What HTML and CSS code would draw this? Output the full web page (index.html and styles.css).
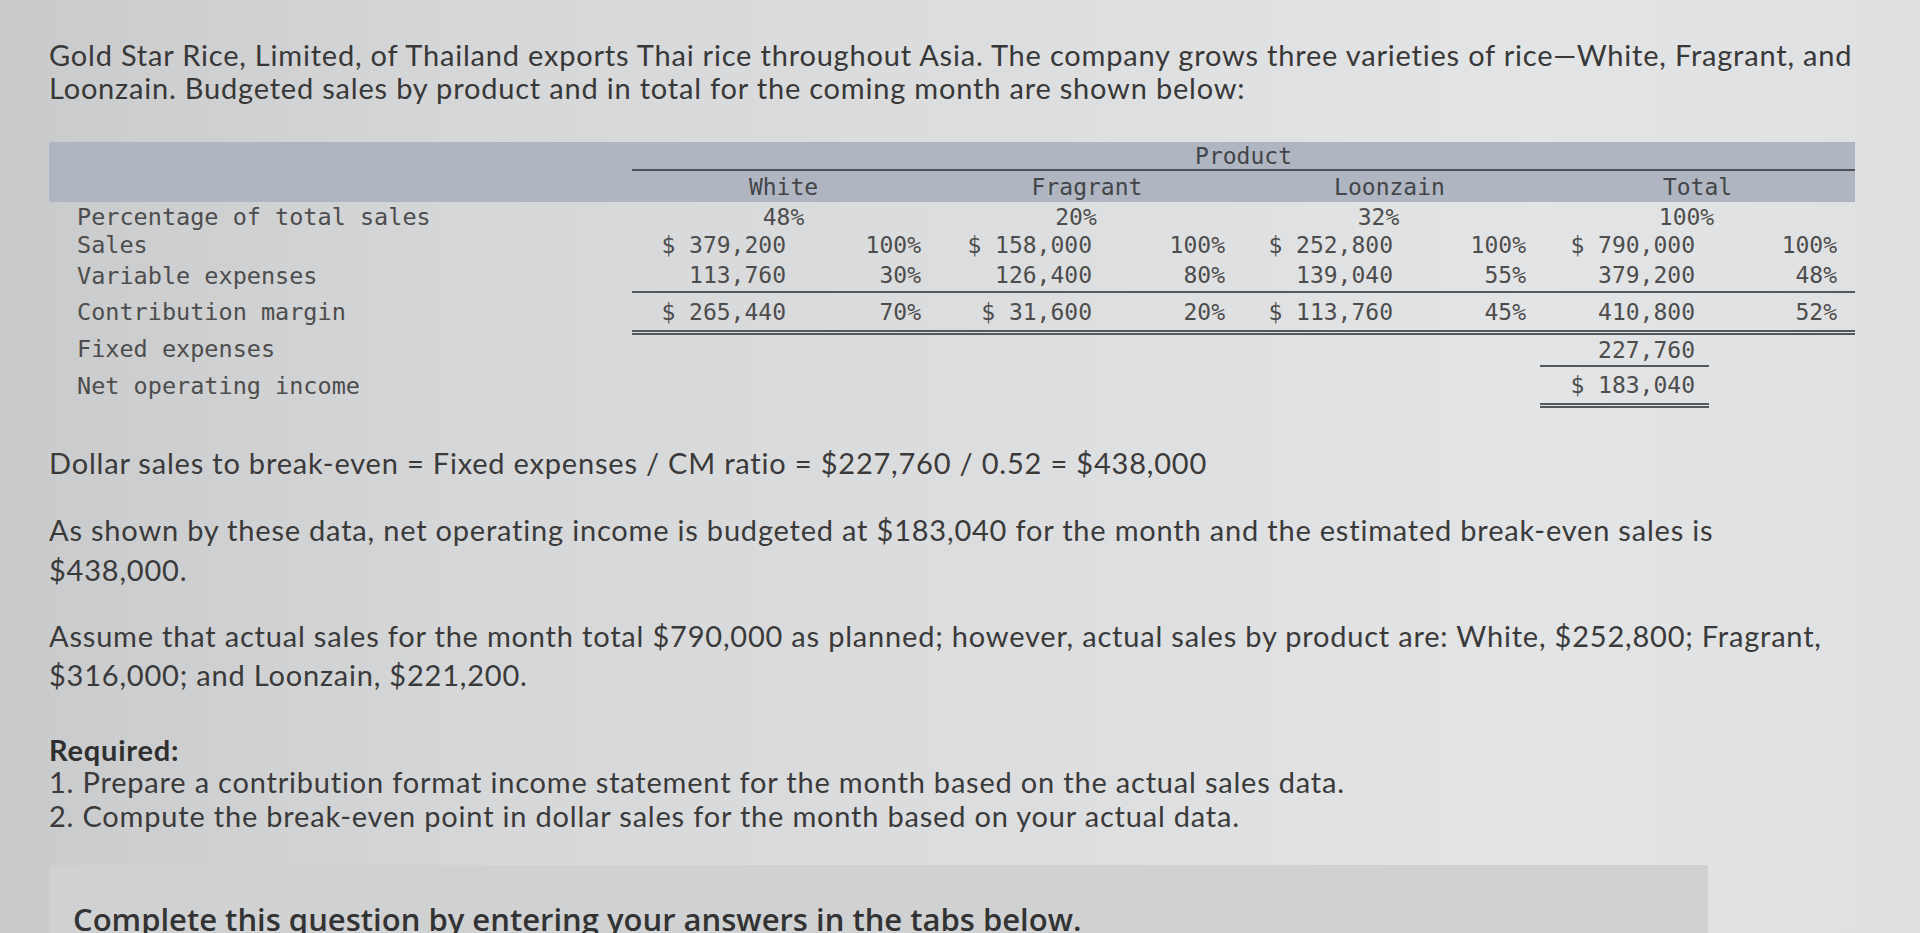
FILE: index.html
```html
<!DOCTYPE html>
<html lang="en">
<head>
<meta charset="utf-8">
<title>Gold Star Rice</title>
<link rel="stylesheet" href="styles.css">
</head>
<body>
<div class="page">
  <p class="intro">Gold Star Rice, Limited, of Thailand exports Thai rice throughout Asia. The company grows three varieties of rice—White, Fragrant, and<br>Loonzain. Budgeted sales by product and in total for the coming month are shown below:</p>

  <table class="stmt">
    <colgroup>
      <col class="c-lbl">
      <col class="c-a1"><col class="c-p1">
      <col class="c-a2"><col class="c-p2">
      <col class="c-a3"><col class="c-p3">
      <col class="c-a4"><col class="c-p4">
    </colgroup>
    <thead>
      <tr class="h1">
        <th class="lbl"></th>
        <th colspan="8" class="prod">Product</th>
      </tr>
      <tr class="h2">
        <th class="lbl"></th>
        <th colspan="2">White</th>
        <th colspan="2">Fragrant</th>
        <th colspan="2">Loonzain</th>
        <th colspan="2">Total</th>
      </tr>
    </thead>
    <tbody>
      <tr class="r-pct">
        <td class="lbl">Percentage of total sales</td>
        <td colspan="2" class="share first">48%</td>
        <td colspan="2" class="share">20%</td>
        <td colspan="2" class="share">32%</td>
        <td colspan="2" class="share">100%</td>
      </tr>
      <tr class="r-sales">
        <td class="lbl">Sales</td>
        <td class="amt">$ 379,200</td><td class="pct">100%</td>
        <td class="amt">$ 158,000</td><td class="pct">100%</td>
        <td class="amt">$ 252,800</td><td class="pct">100%</td>
        <td class="amt">$ 790,000</td><td class="pct last">100%</td>
      </tr>
      <tr class="r-var">
        <td class="lbl">Variable expenses</td>
        <td class="amt">113,760</td><td class="pct">30%</td>
        <td class="amt">126,400</td><td class="pct">80%</td>
        <td class="amt">139,040</td><td class="pct">55%</td>
        <td class="amt">379,200</td><td class="pct last">48%</td>
      </tr>
      <tr class="r-cm">
        <td class="lbl">Contribution margin</td>
        <td class="amt">$ 265,440</td><td class="pct">70%</td>
        <td class="amt">$ 31,600</td><td class="pct">20%</td>
        <td class="amt">$ 113,760</td><td class="pct">45%</td>
        <td class="amt tot">410,800</td><td class="pct last">52%</td>
      </tr>
      <tr class="r-fixed">
        <td class="lbl">Fixed expenses</td>
        <td></td><td></td><td></td><td></td><td></td><td></td>
        <td class="amt tot single">227,760</td><td></td>
      </tr>
      <tr class="r-net">
        <td class="lbl">Net operating income</td>
        <td></td><td></td><td></td><td></td><td></td><td></td>
        <td class="amt tot dbl">$ 183,040</td><td></td>
      </tr>
    </tbody>
  </table>

  <p class="formula">Dollar sales to break-even = Fixed expenses / CM ratio = $227,760 / 0.52 = $438,000</p>

  <p class="shown">As shown by these data, net operating income is budgeted at $183,040 for the month and the estimated break-even sales is<br>$438,000.</p>

  <p class="assume">Assume that actual sales for the month total $790,000 as planned; however, actual sales by product are: White, $252,800; Fragrant,<br>$316,000; and Loonzain, $221,200.</p>

  <div class="required">
    <p class="req-title">Required:</p>
    <p class="req-item">1. Prepare a contribution format income statement for the month based on the actual sales data.</p>
    <p class="req-item">2. Compute the break-even point in dollar sales for the month based on your actual data.</p>
  </div>

  <div class="answer-box">
    <p class="answer-text">Complete this question by entering your answers in the tabs below.</p>
  </div>
</div>
</body>
</html>
```

FILE: styles.css
```css
html, body {
  margin: 0;
  padding: 0;
  height: 933px;
  overflow: hidden;
}

body {
  background: linear-gradient(90deg, #c9cacc 0%, #d6d7d9 25%, #dddedf 55%, #e3e4e5 80%, #dfe0e1 100%);
  font-family: Lato, "Open Sans", "Liberation Sans", sans-serif;
  color: #3a3a3a;
}

.page {
  padding: 38px 0 0 49px;
}

p {
  margin: 0;
}

.intro,
.formula,
.shown,
.assume,
.required {
  font-size: 29px;
  letter-spacing: 0.8px;
  white-space: nowrap;
}

.intro {
  line-height: 33px;
  color: #383838;
}

/* ---------- Table ---------- */
.stmt {
  margin-top: 38px;
  width: 1806px;
  table-layout: fixed;
  border-collapse: collapse;
  border-spacing: 0;
  font-family: "DejaVu Sans Mono", "Liberation Mono", monospace;
  font-size: 23px;
  color: #4d4d4d;
}

.c-lbl { width: 583px; }
.c-a1 { width: 168px; }
.c-p1 { width: 135px; }
.c-a2 { width: 171px; }
.c-p2 { width: 133px; }
.c-a3 { width: 168px; }
.c-p3 { width: 133px; }
.c-a4 { width: 169px; }
.c-p4 { width: 146px; }

.stmt th,
.stmt td {
  padding: 0;
  white-space: nowrap;
}

.stmt thead th {
  background: #afb6c1;
  font-weight: normal;
  color: #434548;
  text-align: center;
}

.stmt .h1 th {
  height: 27px;
}

.stmt .h1 .prod {
  border-bottom: 2px solid #4f5358;
  vertical-align: middle;
}

.stmt .h2 th {
  height: 31px;
}

.stmt .lbl {
  text-align: left;
  padding-left: 28px;
  font-size: 23.5px;
}

.stmt td.share {
  text-align: center;
  padding-right: 22px;
}

.stmt td.share.first {
  padding-right: 0;
}

.stmt td.amt,
.stmt td.pct {
  text-align: right;
  padding-right: 14px;
}

.stmt td.pct.last {
  padding-right: 18px;
}

.r-pct td { height: 29px; }
.r-sales td { height: 28px; }
.r-var td { height: 32px; }
.r-var td.amt,
.r-var td.pct {
  border-bottom: 2px solid #55585c;
}
.r-cm td { height: 37px; }
.r-cm td.amt,
.r-cm td.pct {
  border-bottom: 5px double #55585c;
}
.r-fixed td { height: 30px; }
.r-net td { height: 36px; }

.stmt td.single {
  border-bottom: 2px solid #55585c;
}

.stmt td.dbl {
  border-bottom: 5px double #55585c;
}

/* ---------- Paragraphs ---------- */
.formula {
  margin-top: 38px;
  line-height: 34px;
}

.shown {
  margin-top: 30px;
  line-height: 40px;
}

.assume {
  margin-top: 26px;
  line-height: 39px;
}

.required {
  margin-top: 41px;
}

.req-title {
  font-weight: bold;
  line-height: 30px;
  color: #2f2f2f;
}

.req-item {
  line-height: 34px;
}

.answer-box {
  margin-top: 32px;
  width: 1659px;
  height: 120px;
  background: #d0d1d3;
  padding: 36px 0 0 24px;
  box-sizing: border-box;
}

.answer-text {
  font-family: "Open Sans", "Liberation Sans", sans-serif;
  font-weight: 600;
  font-size: 31px;
  line-height: 36px;
  color: #333;
  white-space: nowrap;
}
```
